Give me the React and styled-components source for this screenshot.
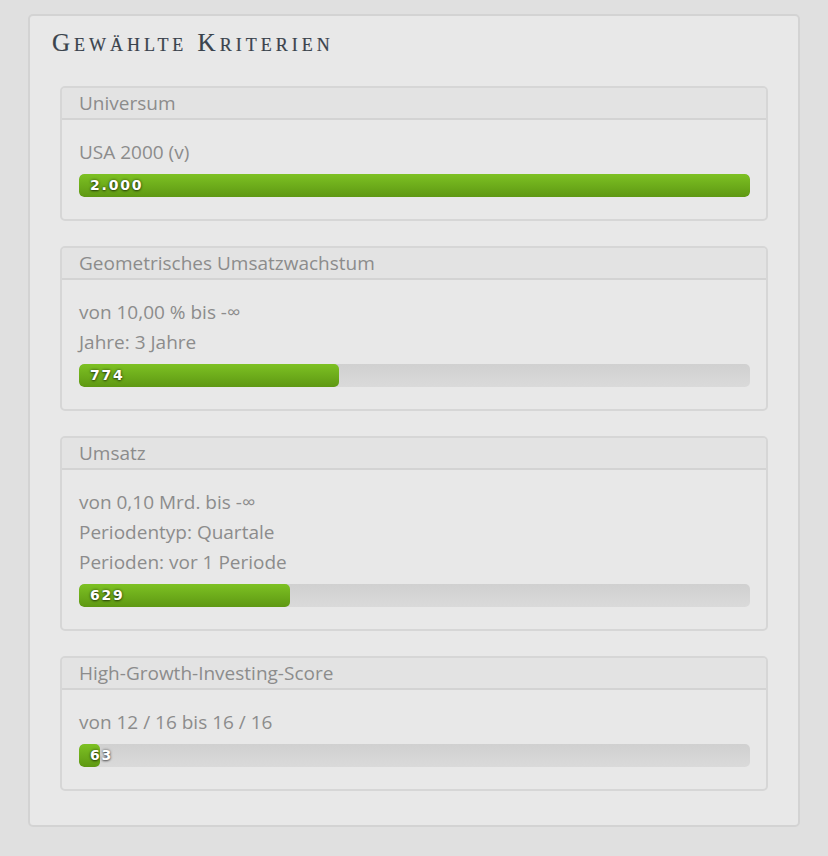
import React from "react";
import styled, { createGlobalStyle } from "styled-components";

const Global = createGlobalStyle`
  html, body { margin: 0; padding: 0; background: #e0e0e0; }
  body { font-family: "Open Sans", "Lato", sans-serif; }
`;

const Page = styled.div`
  padding: 14px 28px 30px 28px;
  width: 772px;
`;

const Panel = styled.section`
  background: #e8e8e8;
  border: 2px solid #d3d3d3;
  border-radius: 5px;
  padding: 15px 30px 34px 30px;
`;

const Title = styled.h2`
  margin: 0 0 31px -8px;
  font-family: "Liberation Serif", "DejaVu Serif", serif;
  font-variant: small-caps;
  font-weight: normal;
  font-size: 25px;
  line-height: 24px;
  letter-spacing: 4px;
  color: #3a434d;
  -webkit-text-stroke: 0.2px #3a434d;
`;

const Cards = styled.div`
  display: flex;
  flex-direction: column;
  gap: 25px;
`;

const Card = styled.div`
  border: 2px solid #d6d6d6;
  border-radius: 5px;
  overflow: hidden;
`;

const CardHeader = styled.div`
  background: #e3e3e3;
  border-bottom: 2px solid #d3d3d3;
  height: 30px;
  padding: 0 17px;
  display: flex;
  align-items: center;
  font-size: 19px;
  color: #8c8c8c;
`;

const CardBody = styled.div`
  padding: 17px 16px 22px 17px;
`;

const Line = styled.div`
  font-size: 19px;
  line-height: 30px;
  color: #8c8c8c;
`;

const Track = styled.div`
  position: relative;
  margin-top: 7px;
  height: 23px;
  border-radius: 5px;
  background: linear-gradient(#d0d0d0, #dadada);
  overflow: hidden;
`;

const Fill = styled.div`
  height: 100%;
  border-radius: 5px;
  background: linear-gradient(#7dc123, #5e9813);
`;

const Count = styled.span`
  position: absolute;
  left: 11px;
  top: 0;
  line-height: 23px;
  font-family: "DejaVu Sans", sans-serif;
  font-weight: bold;
  font-size: 14px;
  letter-spacing: 1.8px;
  color: #fff;
  text-shadow: 0 0 3px rgba(0, 0, 0, 0.6), 0 1px 2px rgba(0, 0, 0, 0.45);
`;

const TOTAL = 2000;

const criteria = [
  { title: "Universum", lines: ["USA 2000 (v)"], count: 2000 },
  {
    title: "Geometrisches Umsatzwachstum",
    lines: ["von 10,00 % bis -∞", "Jahre: 3 Jahre"],
    count: 774,
  },
  {
    title: "Umsatz",
    lines: ["von 0,10 Mrd. bis -∞", "Periodentyp: Quartale", "Perioden: vor 1 Periode"],
    count: 629,
  },
  {
    title: "High-Growth-Investing-Score",
    lines: ["von 12 / 16 bis 16 / 16"],
    count: 63,
  },
];

const fmt = (n) => n.toLocaleString("de-DE");

export default function App() {
  return (
    <>
      <Global />
      <Page>
        <Panel>
          <Title>Gewählte Kriterien</Title>
          <Cards>
            {criteria.map((c) => (
              <Card key={c.title}>
                <CardHeader>{c.title}</CardHeader>
                <CardBody>
                  {c.lines.map((l) => (
                    <Line key={l}>{l}</Line>
                  ))}
                  <Track>
                    <Fill style={{ width: `${(c.count / TOTAL) * 100}%` }} />
                    <Count>{fmt(c.count)}</Count>
                  </Track>
                </CardBody>
              </Card>
            ))}
          </Cards>
        </Panel>
      </Page>
    </>
  );
}
